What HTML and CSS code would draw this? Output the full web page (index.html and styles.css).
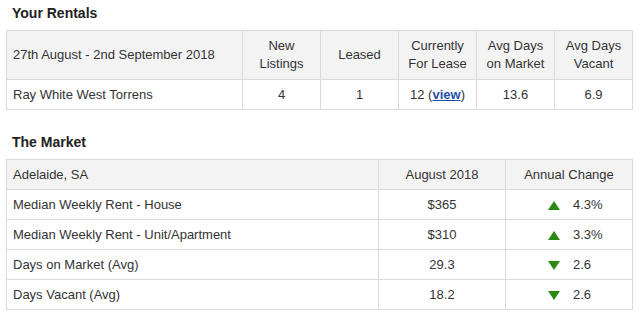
FILE: index.html
```html
<!DOCTYPE html>
<html>
<head>
<meta charset="utf-8">
<link rel="stylesheet" href="styles.css">
</head>
<body>
<div class="page">
  <h2 class="title">Your Rentals</h2>
  <table class="grid rentals">
    <colgroup>
      <col class="c-wide"><col class="c-num"><col class="c-num"><col class="c-num"><col class="c-num"><col class="c-num">
    </colgroup>
    <thead>
      <tr>
        <th class="left">27th August - 2nd September 2018</th>
        <th>New<br>Listings</th>
        <th>Leased</th>
        <th>Currently<br>For Lease</th>
        <th>Avg Days<br>on Market</th>
        <th>Avg Days<br>Vacant</th>
      </tr>
    </thead>
    <tbody>
      <tr>
        <td class="left">Ray White West Torrens</td>
        <td>4</td>
        <td>1</td>
        <td>12 (<a class="link" href="#">view</a>)</td>
        <td>13.6</td>
        <td>6.9</td>
      </tr>
    </tbody>
  </table>

  <h2 class="title second">The Market</h2>
  <table class="grid market">
    <colgroup>
      <col class="m-wide"><col class="m-col"><col class="m-col">
    </colgroup>
    <thead>
      <tr>
        <th class="left">Adelaide, SA</th>
        <th>August 2018</th>
        <th>Annual Change</th>
      </tr>
    </thead>
    <tbody>
      <tr>
        <td class="left">Median Weekly Rent - House</td>
        <td>$365</td>
        <td class="change"><svg class="tri" width="12" height="9" viewBox="0 0 12 9"><polygon points="6,0 12,9 0,9" fill="#2b8a12"/></svg><span>4.3%</span></td>
      </tr>
      <tr>
        <td class="left">Median Weekly Rent - Unit/Apartment</td>
        <td>$310</td>
        <td class="change"><svg class="tri" width="12" height="9" viewBox="0 0 12 9"><polygon points="6,0 12,9 0,9" fill="#2b8a12"/></svg><span>3.3%</span></td>
      </tr>
      <tr>
        <td class="left">Days on Market (Avg)</td>
        <td>29.3</td>
        <td class="change"><svg class="tri" width="12" height="9" viewBox="0 0 12 9"><polygon points="0,0 12,0 6,9" fill="#2b8a12"/></svg><span>2.6</span></td>
      </tr>
      <tr>
        <td class="left">Days Vacant (Avg)</td>
        <td>18.2</td>
        <td class="change"><svg class="tri" width="12" height="9" viewBox="0 0 12 9"><polygon points="0,0 12,0 6,9" fill="#2b8a12"/></svg><span>2.6</span></td>
      </tr>
    </tbody>
  </table>
</div>
</body>
</html>
```
FILE: styles.css
```css
html, body {
  margin: 0;
  padding: 0;
  background: #ffffff;
}
body {
  font-family: "Liberation Sans", Arial, sans-serif;
  color: #333333;
  font-size: 13px;
}
.page {
  padding: 3px 6px 0 6px;
}
.title {
  margin: 0 0 7px 0;
  padding-left: 6px;
  font-size: 14px;
  line-height: 20px;
  font-weight: bold;
  color: #222222;
}
.title.second {
  margin-top: 22px;
}
.grid {
  border-collapse: collapse;
  table-layout: fixed;
  width: 627px;
}
.grid th, .grid td {
  border: 1px solid #dadada;
  text-align: center;
  line-height: 18px;
  font-weight: normal;
  white-space: nowrap;
}
.grid th {
  background: #f3f3f3;
  padding: 6px 6px;
}
.grid td {
  padding: 6px 6px 5px 6px;
}
.market th {
  padding: 6px 6px 5px 6px;
}
.grid .left {
  text-align: left;
}
.c-wide { width: 236px; }
.c-num { width: 78px; }
.m-wide { width: 372px; }
.m-col { width: 127px; }
.link {
  color: #1f4fa8;
  font-weight: bold;
  text-decoration: underline;
}
.grid td.change {
  text-align: left;
  padding-left: 42px;
}
.tri {
  display: inline-block;
  vertical-align: -1px;
  margin-right: 13px;
}
```
